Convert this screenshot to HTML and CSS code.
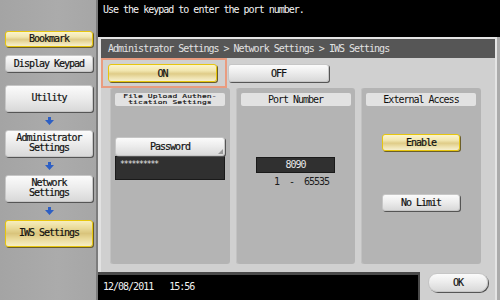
FILE: index.html
```html
<!DOCTYPE html>
<html lang="en">
<head>
  <meta charset="UTF-8" />
  <meta name="viewport" content="width=device-width, initial-scale=1.0"/>
  <title>IWS Settings</title>
  <link rel="stylesheet" href="styles.css">
</head>
<body>
  <div class="screen">
    <aside class="sidebar">
      <button class="btn btn-yellow side-btn">Bookmark</button>
      <button class="btn side-btn keypad">Display Keypad</button>

      <div class="path">
        <div class="btn side-btn tall">Utility</div>
        <div class="arrow">
          <svg width="9" height="8" viewBox="0 0 9 8"><polygon points="3,0 6,0 6,3 9,3 4.5,8 0,3 3,3" fill="#2d5fc4"/></svg>
        </div>
        <div class="btn side-btn tall">Administrator<br>Settings</div>
        <div class="arrow">
          <svg width="9" height="8" viewBox="0 0 9 8"><polygon points="3,0 6,0 6,3 9,3 4.5,8 0,3 3,3" fill="#2d5fc4"/></svg>
        </div>
        <div class="btn side-btn tall center">Network<br>Settings</div>
        <div class="arrow">
          <svg width="9" height="8" viewBox="0 0 9 8"><polygon points="3,0 6,0 6,3 9,3 4.5,8 0,3 3,3" fill="#2d5fc4"/></svg>
        </div>
        <div class="btn btn-yellow side-btn tall current">IWS Settings</div>
      </div>
    </aside>

    <main class="main">
      <p class="message">Use the keypad to enter the port number.</p>

      <section class="dialog">
        <h1 class="dialog-title">Administrator Settings &gt; Network Settings &gt; IWS Settings</h1>

        <div class="dialog-body">
          <div class="toggle-row">
            <div class="focus">
              <button class="btn btn-yellow toggle">ON</button>
            </div>
            <button class="btn toggle off">OFF</button>
          </div>

          <div class="columns">
            <div class="col">
              <div class="col-head small"><span>File Upload Authen-<br>tication Settings</span></div>
              <button class="btn field-btn">Password</button>
              <div class="dark-box pass">**********</div>
            </div>

            <div class="col">
              <div class="col-head">Port Number</div>
              <div class="dark-box port">8090</div>
              <div class="range">1&nbsp;&nbsp;-&nbsp;&nbsp;65535</div>
            </div>

            <div class="col">
              <div class="col-head">External Access</div>
              <button class="btn btn-yellow access enable">Enable</button>
              <button class="btn access limit">No Limit</button>
            </div>
          </div>
        </div>

        <div class="dialog-foot">
          <div class="status">
            <span>12/08/2011</span>
            <span>15:56</span>
          </div>
          <div class="ok-tab">
            <button class="btn ok">OK</button>
          </div>
        </div>
      </section>
    </main>
  </div>
</body>
</html>
```

FILE: styles.css
```css
body {
  margin: 0;
  padding: 0;
  background: #000;
  font-family: "DejaVu Sans Mono", "Liberation Mono", monospace;
  font-size: 10px;
  letter-spacing: -1px;
}

.screen {
  display: flex;
  width: 500px;
  height: 300px;
  overflow: hidden;
}

/* left column */

.sidebar {
  width: 98px;
  border-right: 2px solid #7c7c7c;
  background: linear-gradient(90deg, #a4a4a4, #ababab 60%, #a6a6a6);
  padding-top: 31px;
  box-sizing: border-box;
  display: flex;
  flex-direction: column;
  align-items: flex-start;
}

.btn {
  font-family: inherit;
  font-size: 10px;
  letter-spacing: -1px;
  color: #111;
  background: linear-gradient(#fbfbfb, #ededed 45%, #d9d9d9);
  border: 1px solid #c6c6c6;
  border-radius: 3px;
  box-shadow: 1px 1px 0 #555;
  padding: 0;
  margin: 0;
  box-sizing: border-box;
  text-align: center;
  position: relative;
  -webkit-text-stroke: 0.2px #111;
}

.btn-yellow {
  background: linear-gradient(#fbf4cc, #f1e6b0 35%, #dfcc88 55%, #eee2b0 80%, #f6efcf);
  border: 1px solid #e7c60e;
  box-shadow: 1px 1px 0 #6b5e2a;
}

.side-btn {
  margin-left: 5px;
  width: 88px;
  height: 16px;
  line-height: 14px;
}

.side-btn.keypad {
  margin-top: 8px;
  height: 17px;
}

.path {
  margin-top: 13px;
  display: flex;
  flex-direction: column;
}

.side-btn.tall {
  height: 27px;
  line-height: 10px;
  display: flex;
  align-items: center;
  justify-content: center;
  padding-bottom: 1px;
}

.side-btn.center {
  text-align: center;
}

.side-btn.current {
  background: linear-gradient(#f7eebe, #e8d998 30%, #d9c47c 50%, #e8d898 70%, #f6eec4);
}

.arrow {
  height: 18px;
  display: flex;
  align-items: center;
  justify-content: center;
  width: 98px;
}

/* main area */

.main {
  flex: 1;
  display: flex;
  flex-direction: column;
  background: #000;
}

.message {
  margin: 0;
  height: 37px;
  padding: 4px 0 0 105px;
  margin-left: -100px;
  box-sizing: border-box;
  color: #f4f4f4;
  line-height: 12px;
}

.dialog {
  flex: 1;
  display: flex;
  flex-direction: column;
  background: #d0d0d0;
  border-top: 2px solid #e4e4e4;
  border-left: 3px solid #e2e2e2;
  border-right: 2px solid #e4e4e4;
  margin-right: 3px;
  box-shadow: 3px 0 0 #ababab;
}

.dialog-title {
  margin: 0;
  height: 19px;
  line-height: 19px;
  padding-left: 7px;
  background: #565656;
  color: #e2e2e2;
  font-size: 10px;
  font-weight: normal;
}

.dialog-body {
  height: 214px;
  padding-right: 12px;
}

.toggle-row {
  display: flex;
  height: 30px;
}

.focus {
  width: 126px;
  border: 2px solid #e99c80;
  box-sizing: border-box;
  padding: 4px 0 0 5px;
}

.toggle {
  width: 109px;
  height: 18px;
}

.toggle.off {
  width: 101px;
  margin: 6px 0 0 1px;
}

.columns {
  display: flex;
  gap: 6px;
  margin-left: 9px;
  height: 176px;
}

.col {
  width: 120px;
  background: #b4b4b4;
  border-radius: 3px;
  box-shadow: inset 1px 0 0 #c2c2c2;
  display: flex;
  flex-direction: column;
  align-items: center;
  padding-top: 5px;
  box-sizing: border-box;
}

.col:nth-child(2) {
  width: 119px;
}

.col-head {
  width: 110px;
  height: 13px;
  line-height: 13px;
  background: #e2e2e2;
  border-radius: 2px;
  text-align: center;
  color: #111;
}

.col-head.small {
  font-size: 8px;
  letter-spacing: 0.1px;
  -webkit-text-stroke: 0.2px #111;
}

.col-head.small span {
  display: block;
  line-height: 9px;
  transform: scaleY(0.7);
  transform-origin: center top;
}

.field-btn {
  margin-top: 31px;
  width: 110px;
  height: 19px;
}

.field-btn::after {
  content: "";
  position: absolute;
  right: 1px;
  bottom: 1px;
  border-left: 5px solid transparent;
  border-bottom: 5px solid #9a9a9a;
}

.dark-box {
  background: #303030;
  border: 1px solid #1a1a1a;
  color: #e8e8e8;
  box-sizing: border-box;
}

.dark-box.pass {
  width: 110px;
  height: 24px;
  padding: 3px 0 0 4px;
  font-size: 8px;
  line-height: 9px;
}

.dark-box.port {
  margin-top: 51px;
  width: 79px;
  height: 16px;
  line-height: 14px;
  text-align: center;
}

.range {
  margin-top: 3px;
  padding-left: 12px;
  color: #1c1c1c;
}

.access {
  width: 78px;
  height: 17px;
}

.access.enable {
  margin-top: 28px;
}

.access.limit {
  margin-top: 43px;
}

/* bottom line */

.dialog-foot {
  display: flex;
  height: 28px;
  margin-left: -3px;
}

.status {
  width: 322px;
  border-top: 3px solid #4a4a4a;
  border-right: 2px solid #4a4a4a;
  background: #000;
  color: #f2f2f2;
  padding: 6px 0 0 5px;
  box-sizing: border-box;
  display: flex;
  gap: 16px;
}

.ok-tab {
  flex: 1;
  padding: 1px 0 0 8px;
}

.ok {
  width: 60px;
  height: 19px;
  border-radius: 9px;
}
```
